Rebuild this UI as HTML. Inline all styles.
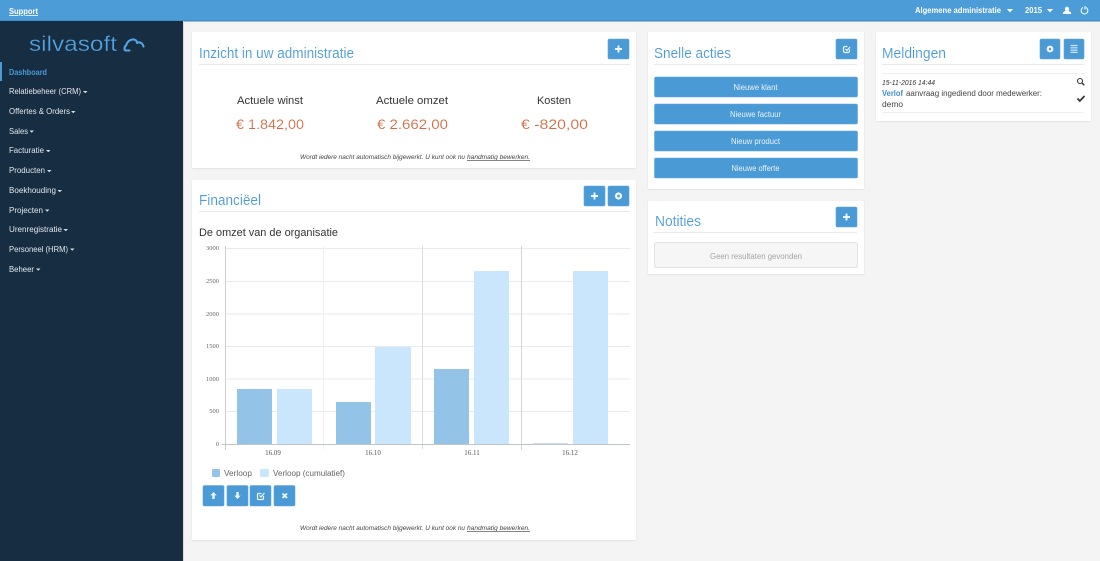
<!DOCTYPE html>
<html lang="nl"><head><meta charset="utf-8"><title>Silvasoft</title>
<style>
html,body{margin:0;padding:0;background:#f4f4f4;width:1100px;height:561px;overflow:hidden}
svg{display:block;font-family:"Liberation Sans",sans-serif;filter:blur(.35px)}
.card{fill:#fff;filter:url(#sh)}
.btn{fill:#4a9ad6;stroke:#5fa6dc;stroke-width:.6}
.t{fill:#4a9ad6;font-size:15px;stroke:#fff;stroke-width:.1}
.n{fill:#e2e8ed;font-size:8px}
.c{fill:#d5dde4}
.w{fill:#fff}
.ln{stroke:#e9e9e9;stroke-width:1}
.g{stroke:#eaeaea;stroke-width:1}
.s{fill:#333;font-size:11px}
.v{fill:#d0693f;font-size:14px;stroke:#fff;stroke-width:.12}
.o{fill:#444;font-size:6.5px;font-style:italic}
.bt{fill:#eaf3fa;font-size:8px;text-anchor:middle}
.y{fill:#666;font-family:"Liberation Serif",serif;font-size:6.5px;text-anchor:end}
.x{fill:#555;font-family:"Liberation Serif",serif;font-size:7px;text-anchor:middle}
.ic{fill:none;stroke:#eef6fc;stroke-width:1.900}
.ar{fill:#eef6fc}
</style></head><body>
<svg width="1100" height="561" viewBox="0 0 1100 561" xmlns="http://www.w3.org/2000/svg">
<defs><filter id="sh" x="-2%" y="-2%" width="104%" height="104%"><feDropShadow dx="0" dy="0.6" stdDeviation="0.8" flood-color="#000" flood-opacity=".1"/></filter></defs>
<rect width="1100" height="561" fill="#f4f4f4"/>
<rect width="1100" height="21" fill="#4c9cd8"/>
<rect y="20.500" width="1100" height="1" fill="#3a7fb4"/>
<rect y="21" width="183" height="540" fill="#172d41"/>
<rect x="183" y="21" width="1" height="540" fill="#d8dcdf"/>

<text x="9" y="14" fill="#fff" font-size="8" font-weight="bold" text-decoration="underline" textLength="29" lengthAdjust="spacingAndGlyphs">Support</text>
<text x="915" y="13" fill="#fff" font-size="8" font-weight="bold" textLength="86" lengthAdjust="spacingAndGlyphs">Algemene administratie</text>
<path d="M1007 9h6l-3 3.500z" class="w"/>
<text x="1025" y="13" fill="#fff" font-size="8" font-weight="bold" textLength="17" lengthAdjust="spacingAndGlyphs">2015</text>
<path d="M1047 9h6l-3 3.500z" class="w"/>
<path d="M1067 6.500a2.300 2.700 0 0 1 1.600 4.400l2.400 1.500v1.600h-8v-1.600l2.400-1.500a2.300 2.700 0 0 1 1.600-4.400z" class="w"/>
<path d="M1083 7.500a3.400 3.400 0 1 0 3 0M1085 6v3.500" fill="none" stroke="#fff" stroke-width="1"/>

<text x="29" y="51" fill="#52a5e2" font-size="21.500" stroke="#172d41" stroke-width=".3" textLength="88" lengthAdjust="spacingAndGlyphs">silvasoft</text>
<path d="M129.500 50.500H126C124 50.500 124 47 126 45.500C127.500 41 131 39 134 39.500C136 40 137 41.500 137 43C139 41.500 142.500 42.500 143.500 46.500" fill="none" stroke="#52a5e2" stroke-width="2.100" stroke-linecap="round" stroke-linejoin="round"/>

<rect y="62" width="2" height="19" fill="#4a9ad6"/>
<text x="9" y="75" fill="#4a9ad6" font-size="8" font-weight="bold" textLength="38" lengthAdjust="spacingAndGlyphs">Dashboard</text>
<text class="n" x="9" y="94" textLength="72" lengthAdjust="spacingAndGlyphs">Relatiebeheer (CRM)</text><path class="c" d="M83 91h4.500l-2.250 2.200z"/>
<text class="n" x="9" y="114" textLength="61" lengthAdjust="spacingAndGlyphs">Offertes &amp; Orders</text><path class="c" d="M71 111h4.500l-2.250 2.200z"/>
<text class="n" x="9" y="134" textLength="19" lengthAdjust="spacingAndGlyphs">Sales</text><path class="c" d="M29.500 130.500h4.500l-2.250 2.200z"/>
<text class="n" x="9" y="153" textLength="35" lengthAdjust="spacingAndGlyphs">Facturatie</text><path class="c" d="M46 150h4.500l-2.250 2.200z"/>
<text class="n" x="9" y="173" textLength="36" lengthAdjust="spacingAndGlyphs">Producten</text><path class="c" d="M47 170h4.500l-2.250 2.200z"/>
<text class="n" x="9" y="193" textLength="47" lengthAdjust="spacingAndGlyphs">Boekhouding</text><path class="c" d="M57.500 190h4.500l-2.250 2.200z"/>
<text class="n" x="9" y="213" textLength="34" lengthAdjust="spacingAndGlyphs">Projecten</text><path class="c" d="M45 209.500h4.500l-2.250 2.200z"/>
<text class="n" x="9" y="232" textLength="53" lengthAdjust="spacingAndGlyphs">Urenregistratie</text><path class="c" d="M63.500 229h4.500l-2.250 2.200z"/>
<text class="n" x="9" y="252" textLength="59" lengthAdjust="spacingAndGlyphs">Personeel (HRM)</text><path class="c" d="M70 248.500h4.500l-2.250 2.200z"/>
<text class="n" x="9" y="272" textLength="25" lengthAdjust="spacingAndGlyphs">Beheer</text><path class="c" d="M36 268.500h4.500l-2.250 2.200z"/>

<!-- Inzicht -->
<rect class="card" x="192" y="32" width="444" height="136"/>
<text class="t" x="199" y="58" textLength="155" lengthAdjust="spacingAndGlyphs">Inzicht in uw administratie</text>
<line class="ln" x1="199" x2="630" y1="64.500" y2="64.500"/>
<rect class="btn" x="608" y="39" width="21" height="20" rx="1.500"/>
<path class="ic" d="M618.500 45.500v7M615 49h7"/>
<text class="s" x="237" y="104" textLength="66" lengthAdjust="spacingAndGlyphs">Actuele winst</text>
<text class="s" x="376" y="104" textLength="72" lengthAdjust="spacingAndGlyphs">Actuele omzet</text>
<text class="s" x="537" y="104" textLength="34" lengthAdjust="spacingAndGlyphs">Kosten</text>
<text class="v" x="236" y="129" textLength="68" lengthAdjust="spacingAndGlyphs">€ 1.842,00</text>
<text class="v" x="377" y="129" textLength="71" lengthAdjust="spacingAndGlyphs">€ 2.662,00</text>
<text class="v" x="521" y="129" textLength="67" lengthAdjust="spacingAndGlyphs">€ -820,00</text>
<text class="o" x="300" y="159" textLength="165" lengthAdjust="spacingAndGlyphs">Wordt iedere nacht automatisch bijgewerkt. U kunt ook nu</text>
<text class="o" x="467" y="159" textLength="63" lengthAdjust="spacingAndGlyphs" text-decoration="underline">handmatig bewerken.</text>

<!-- Financieel -->
<rect class="card" x="192" y="180" width="444" height="360"/>
<text class="t" x="199" y="205" textLength="62" lengthAdjust="spacingAndGlyphs">Financiëel</text>
<line class="ln" x1="199" x2="630" y1="211.500" y2="211.500"/>
<rect class="btn" x="584" y="186" width="21" height="20" rx="1.500"/>
<path class="ic" d="M594.500 192.500v7M591 196h7"/>
<rect class="btn" x="608" y="186" width="21" height="20" rx="1.500"/>
<circle cx="618.500" cy="196" r="3.600" fill="#eef6fc"/><circle cx="618.500" cy="196" r="1.300" fill="#4a9ad6"/>
<text x="199" y="236" fill="#333" font-size="11" textLength="139" lengthAdjust="spacingAndGlyphs">De omzet van de organisatie</text>

<g>
<line class="g" x1="225" x2="630" y1="248.500" y2="248.500"/>
<line class="g" x1="225" x2="630" y1="281.500" y2="281.500"/>
<line class="g" x1="225" x2="630" y1="314" y2="314"/>
<line class="g" x1="225" x2="630" y1="346.500" y2="346.500"/>
<line class="g" x1="225" x2="630" y1="379" y2="379"/>
<line class="g" x1="225" x2="630" y1="411.500" y2="411.500"/>
<line stroke="#f0f0f0" x1="323.500" x2="323.500" y1="246" y2="449"/>
<line stroke="#dcdcdc" x1="422.500" x2="422.500" y1="246" y2="449"/>
<line stroke="#d4d4d4" x1="521.500" x2="521.500" y1="246" y2="450"/>
<line stroke="#cdcdcd" x1="225.500" x2="225.500" y1="246" y2="450"/>
<rect x="237" y="389" width="35" height="55" fill="#93c3e7"/>
<rect x="277" y="389" width="35" height="55" fill="#c9e6fd"/>
<rect x="336" y="402" width="35" height="42" fill="#93c3e7"/>
<rect x="375" y="347" width="36" height="97" fill="#c9e6fd"/>
<rect x="434" y="369" width="35" height="75" fill="#93c3e7"/>
<rect x="474" y="271" width="35" height="173" fill="#c9e6fd"/>
<rect x="533" y="443.500" width="35" height=".8" fill="#93c3e7"/>
<rect x="573" y="271" width="35" height="173" fill="#c9e6fd"/>
<line stroke="#bfc4c8" x1="222" x2="630" y1="444.500" y2="444.500"/>
<text class="y" x="219" y="250">3000</text>
<text class="y" x="219" y="283">2500</text>
<text class="y" x="219" y="316">2000</text>
<text class="y" x="219" y="348">1500</text>
<text class="y" x="219" y="381">1000</text>
<text class="y" x="219" y="413">500</text>
<text class="y" x="219" y="446">0</text>
<text class="x" x="273" y="455">16.09</text>
<text class="x" x="373" y="455">16.10</text>
<text class="x" x="472" y="455">16.11</text>
<text class="x" x="570" y="455">16.12</text>
</g>
<rect x="212" y="469" width="8" height="8" rx="1.500" fill="#93c3e7"/>
<text x="224" y="476" fill="#666" font-size="8" textLength="28" lengthAdjust="spacingAndGlyphs">Verloop</text>
<rect x="260" y="469" width="9" height="8" rx="1.500" fill="#c9e6fd"/>
<text x="273" y="476" fill="#666" font-size="8" textLength="72" lengthAdjust="spacingAndGlyphs">Verloop (cumulatief)</text>

<rect class="btn" x="203" y="485.500" width="21" height="20.500" rx="1.500"/>
<path class="ar" d="M213.500 492l3.200 3.400h-2v3.600h-2.400v-3.600h-2z"/>
<rect class="btn" x="227" y="485.500" width="21" height="20.500" rx="1.500"/>
<path class="ar" d="M237.500 499l3.200-3.400h-2v-3.600h-2.400v3.600h-2z"/>
<rect class="btn" x="250" y="485.500" width="21" height="20.500" rx="1.500"/>
<path d="M263.500 496v2.500a1 1 0 0 1-1 1h-4a1 1 0 0 1-1-1v-4a1 1 0 0 1 1-1h3M259.500 495.500l1.500 1.500 3.500-4" fill="none" stroke="#eef6fc" stroke-width="1.200"/>
<rect class="btn" x="274" y="485.500" width="21" height="20.500" rx="1.500"/>
<path class="ic" d="M282.500 493.500l4.500 4.500M287 493.500l-4.500 4.500"/>

<text class="o" x="300" y="530" textLength="165" lengthAdjust="spacingAndGlyphs">Wordt iedere nacht automatisch bijgewerkt. U kunt ook nu</text>
<text class="o" x="467" y="530" textLength="63" lengthAdjust="spacingAndGlyphs" text-decoration="underline">handmatig bewerken.</text>

<!-- Snelle acties -->
<rect class="card" x="648" y="32" width="216" height="157"/>
<text class="t" x="654" y="58" textLength="77" lengthAdjust="spacingAndGlyphs">Snelle acties</text>
<line class="ln" x1="654" x2="857" y1="64.500" y2="64.500"/>
<rect class="btn" x="836" y="39" width="21" height="20" rx="1.500"/>
<path d="M849.500 49.500v1.500a1.500 1.500 0 0 1-1.500 1.500h-3a1.500 1.500 0 0 1-1.500-1.500v-3a1.500 1.500 0 0 1 1.500-1.500h2.500M845.500 49l1.500 1.500 3-3.500" fill="none" stroke="#eef6fc" stroke-width="1.200"/>
<rect class="btn" x="654.500" y="77" width="203" height="20" rx="1.500"/>
<text class="bt" x="755.500" y="90" textLength="44" lengthAdjust="spacingAndGlyphs">Nieuwe klant</text>
<rect class="btn" x="654.500" y="104" width="203" height="20" rx="1.500"/>
<text class="bt" x="755.500" y="117" textLength="51" lengthAdjust="spacingAndGlyphs">Nieuwe factuur</text>
<rect class="btn" x="654.500" y="131" width="203" height="20" rx="1.500"/>
<text class="bt" x="755.500" y="144" textLength="49" lengthAdjust="spacingAndGlyphs">Nieuw product</text>
<rect class="btn" x="654.500" y="158" width="203" height="20" rx="1.500"/>
<text class="bt" x="755.500" y="171" textLength="48" lengthAdjust="spacingAndGlyphs">Nieuwe offerte</text>

<!-- Notities -->
<rect class="card" x="648" y="201" width="216" height="73"/>
<text class="t" x="655" y="226" textLength="46" lengthAdjust="spacingAndGlyphs">Notities</text>
<line class="ln" x1="654" x2="857" y1="232.500" y2="232.500"/>
<rect class="btn" x="836" y="207" width="21" height="20" rx="1.500"/>
<path class="ic" d="M846.500 213.500v7M843 217h7"/>
<rect x="654.500" y="242.500" width="203" height="25" rx="2" fill="#f6f6f6" stroke="#e3e3e3"/>
<text x="756" y="259" fill="#a5a5a5" font-size="8" text-anchor="middle" textLength="92" lengthAdjust="spacingAndGlyphs">Geen resultaten gevonden</text>

<!-- Meldingen -->
<rect class="card" x="876" y="32" width="215" height="89"/>
<text class="t" x="882" y="58" textLength="64" lengthAdjust="spacingAndGlyphs">Meldingen</text>
<line class="ln" x1="882" x2="1084" y1="64.500" y2="64.500"/>
<rect class="btn" x="1040" y="39" width="20" height="20" rx="1.500"/>
<circle cx="1050" cy="49" r="3.400" fill="#eef6fc"/><circle cx="1050" cy="49" r="1.200" fill="#4a9ad6"/>
<rect class="btn" x="1064" y="39" width="20" height="20" rx="1.500"/>
<path d="M1070.500 45.500h7M1070.500 47.800h7M1070.500 50.100h7M1070.500 52.400h7" stroke="#cfe4f5" stroke-width="1.200" fill="none"/>
<line stroke="#f0f0f0" x1="882" x2="1084" y1="73.500" y2="73.500"/>
<line stroke="#f0f0f0" x1="882" x2="1084" y1="112.500" y2="112.500"/>
<text x="882" y="85" fill="#333" font-size="7" font-style="italic" textLength="53" lengthAdjust="spacingAndGlyphs">15-11-2016 14:44</text>
<text x="882" y="96" fill="#3f8ecb" font-size="8" font-weight="bold" textLength="21" lengthAdjust="spacingAndGlyphs">Verlof</text>
<text x="906" y="96" fill="#444" font-size="8" textLength="136" lengthAdjust="spacingAndGlyphs">aanvraag ingediend door medewerker:</text>
<text x="882" y="107" fill="#444" font-size="8" textLength="21" lengthAdjust="spacingAndGlyphs">demo</text>
<circle cx="1080" cy="81" r="2.500" fill="none" stroke="#333" stroke-width="1.100"/>
<path d="M1082 83l2.300 2.300" stroke="#333" stroke-width="1.400"/>
<path d="M1077.500 98.500l2.300 2.500 4.700-5" fill="none" stroke="#333" stroke-width="1.700"/>
</svg>
</body></html>
